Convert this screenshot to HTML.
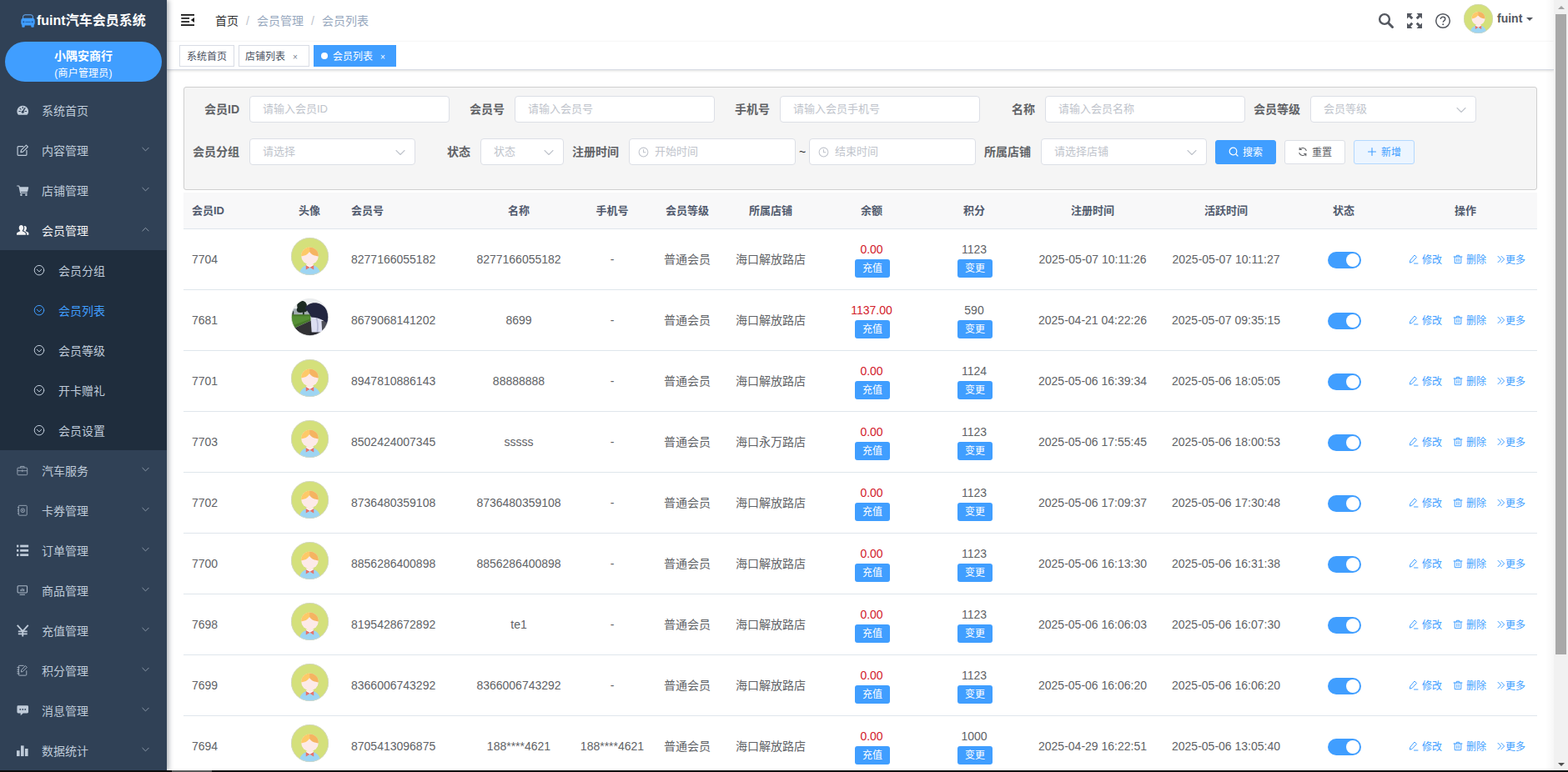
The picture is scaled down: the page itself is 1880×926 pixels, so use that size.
<!DOCTYPE html>
<html lang="zh">
<head>
<meta charset="utf-8">
<title>fuint</title>
<style>
*{box-sizing:border-box;}
html,body{margin:0;padding:0;width:1880px;height:926px;overflow:hidden;}
body{background:#fff;font-family:"Liberation Sans","Noto Sans CJK SC",sans-serif;font-size:14px;color:#606266;}
#app{position:relative;width:1880px;height:926px;overflow:hidden;background:#fff;}
svg{display:block;}
.abs{position:absolute;}
/* sidebar */
#sidebar{position:absolute;left:0;top:0;width:200px;height:924px;background:#304156;box-shadow:2px 0 6px rgba(0,21,41,.35);z-index:5;overflow:hidden;}
#logo{position:absolute;left:0;top:0;width:200px;height:50px;}
#logo .car{position:absolute;left:24px;top:15px;}
#logo .t{position:absolute;left:44px;top:14px;width:134px;height:22px;line-height:22px;font-size:16px;font-weight:bold;color:#fff;white-space:nowrap;}
#pill{position:absolute;left:6px;top:50px;width:188px;height:48px;border-radius:24px;background:#409eff;color:#fff;text-align:center;}
#pill .a{position:absolute;left:0;top:8px;width:188px;height:18px;line-height:18px;font-size:14px;font-weight:bold;}
#pill .b{position:absolute;left:0;top:29px;width:188px;height:18px;line-height:18px;font-size:12px;letter-spacing:.2px;}
.mi{position:absolute;left:0;width:200px;height:48px;line-height:49px;color:#bfcbd9;font-size:14px;white-space:nowrap;}
.mi .ic{position:absolute;left:20px;top:16px;width:15px;height:15px;}
.mi .ic svg{width:14.5px;height:14.5px;}
.mi .tx{position:absolute;left:50px;top:0;}
.mi .ar{position:absolute;left:168px;top:17px;}
.mi.sub .ic{left:40px;}
.mi.sub .tx{left:70px;}
#submenu{position:absolute;left:0;top:300px;width:200px;height:240px;background:#1f2d3d;}
/* navbar */
#navbar{position:absolute;left:200px;top:0;width:1663px;height:50px;background:#fff;box-shadow:0 1px 4px rgba(0,21,41,.1);}
.bc{position:absolute;top:0;height:50px;line-height:50px;font-size:14px;white-space:nowrap;}
/* tags */
#tags{position:absolute;left:200px;top:50px;width:1663px;height:34px;background:#fff;border-bottom:1px solid #d8dce5;box-shadow:0 1px 3px 0 rgba(0,0,0,.12),0 0 3px 0 rgba(0,0,0,.04);}
.tag{position:absolute;top:4px;height:26px;line-height:24px;border:1px solid #d8dce5;background:#fff;color:#495060;font-size:12px;white-space:nowrap;}
.tag.on{background:#409eff;border-color:#409eff;color:#fff;}
.tag span{position:absolute;top:1px;line-height:25px;}
/* panel */
#panel{position:absolute;left:220px;top:104px;width:1623px;height:124px;background:#f5f5f5;border:1px solid #cfcfcf;border-radius:3px;}
.lb{position:absolute;height:32px;line-height:32px;font-size:14px;font-weight:bold;color:#606266;text-align:right;width:68px;padding-right:12px;white-space:nowrap;}
.inp{position:absolute;height:32px;line-height:30px;background:#fff;border:1px solid #dcdfe6;border-radius:4px;color:#c0c4cc;font-size:13px;padding-left:15px;white-space:nowrap;overflow:hidden;}
.inp .dn{position:absolute;right:10px;top:11px;}
.inp .ck{position:absolute;left:10px;top:8px;}
.btn{position:absolute;height:29px;line-height:27px;border-radius:3px;font-size:12px;white-space:nowrap;border:1px solid #dcdfe6;background:#fff;color:#606266;}
.btn span{position:absolute;top:1px;}
.btn>svg{position:absolute;}
/* table */
#thead{position:absolute;left:220px;top:231px;width:1623px;height:44px;background:#f8f8f9;border-bottom:1px solid #dfe6ec;}
.th{position:absolute;top:0;height:43px;line-height:43px;font-size:13px;font-weight:bold;color:#515a6e;white-space:nowrap;text-align:center;}
.row{position:absolute;left:220px;width:1623px;height:73px;border-bottom:1px solid #dfe6ec;background:#fff;}
.c{position:absolute;top:0;height:72px;line-height:72px;font-size:14px;color:#606266;white-space:nowrap;text-align:center;}
.c.l{text-align:left;}
.av{position:absolute;left:129px;top:10px;width:45px;height:45px;}
.num{position:absolute;top:15px;height:18px;line-height:18px;font-size:14px;text-align:center;white-space:nowrap;}
.red{color:#d2202b;}
.mb{position:absolute;top:36px;width:42px;height:22px;line-height:22px;border-radius:3px;background:#409eff;color:#fff;font-size:12px;text-align:center;white-space:nowrap;}
.sw{position:absolute;left:1372px;top:27px;width:40px;height:20px;border-radius:10px;background:#409eff;}
.sw i{position:absolute;left:22px;top:2px;width:16px;height:16px;border-radius:8px;background:#fff;}
.op{position:absolute;top:26px;height:20px;line-height:20px;font-size:12px;color:#409eff;white-space:nowrap;}
.op>svg{position:absolute;top:4px;}
/* scrollbar */
#sb{position:absolute;left:1863px;top:0;width:17px;height:924px;background:#f1f1f1;z-index:8;}
#sbg{position:absolute;left:1853px;top:0;width:10px;height:924px;background:linear-gradient(to right,rgba(0,0,0,0),rgba(0,0,0,.03));z-index:8;}
#sb .th2{position:absolute;left:2px;top:17px;width:13px;height:768px;background:#a8a8a8;}
#bot{position:absolute;left:0;top:924px;width:1880px;height:2px;background:#0c0c0c;z-index:9;}
#bot i{position:absolute;left:206px;top:0;width:48px;height:2px;background:#5a5a5a;}
</style>
</head>
<body>
<div id="app">
<div id="sidebar">
<div id="logo"><div class="car"><svg width="17" height="17" viewBox="0 0 17 17" style="margin-left:.5px;margin-top:.5px"><path d="M2.600 7V4.200A2.400 2.400 0 0 1 5 1.800h7a2.400 2.400 0 0 1 2.400 2.400V7" fill="none" stroke="#6ab3ff" stroke-width="1"/><rect x="0.300" y="5.800" width="16.400" height="8.600" rx="3" fill="#409eff"/><rect x="1.300" y="12" width="3.400" height="4.800" rx=".8" fill="#409eff"/><rect x="12.300" y="12" width="3.400" height="4.800" rx=".8" fill="#409eff"/><circle cx="3.300" cy="10.300" r="1.100" fill="#1d5fa8"/><circle cx="13.700" cy="10.300" r="1.100" fill="#1d5fa8"/><rect x="5.300" y="9.900" width="6.400" height=".9" fill="#1d5fa8"/></svg></div><div class="t">fuint汽车会员系统</div></div>
<div id="pill"><div class="a">小隅安商行</div><div class="b">(商户管理员)</div></div>
<div id="submenu"></div>
<div class="mi " style="top:109px;color:#bfcbd9"><div class="ic"><svg width="16" height="16" viewBox="0 0 16 16" style=""><path fill="#bfcbd9" d="M8 2a7.500 7.500 0 0 0-6.300 11.600c.2.300.5.400.8.400h11c.3 0 .6-.1.8-.4A7.500 7.500 0 0 0 8 2z"/><g stroke="#304156" stroke-width="1.300" stroke-linecap="round"><path d="M8 3.600v1.600M3.200 9.400h1.600M11.200 9.400h1.600M4.400 5.600l1.100 1.100"/><path d="M10.900 5.200 8.300 9.400" stroke-width="1.600"/></g><circle cx="8" cy="10.200" r="1.700" fill="#304156"/></svg></div><div class="tx">系统首页</div></div>
<div class="mi " style="top:157px;color:#bfcbd9"><div class="ic"><svg width="16" height="16" viewBox="0 0 16 16" style=""><g fill="none" stroke="#bfcbd9" stroke-width="1.300" stroke-linejoin="round" stroke-linecap="round"><path d="M8.500 2.800H2.200a1 1 0 0 0-1 1v10a1 1 0 0 0 1 1h10a1 1 0 0 0 1-1V8"/><path d="M12.600 1.200l2.200 2.200-6.600 6.600-2.800.6.6-2.800z"/></g></svg></div><div class="tx">内容管理</div><svg width="9" height="6" viewBox="0 0 8.600 6" style="position:absolute;left:170px;top:19px"><path d="M.6 1.200l3.700 3.700L8 1.200" fill="none" stroke="#8d99a8" stroke-width="1" stroke-linecap="round" stroke-linejoin="round"/></svg></div>
<div class="mi " style="top:205px;color:#bfcbd9"><div class="ic"><svg width="16" height="16" viewBox="0 0 16 16" style=""><path fill="#bfcbd9" d="M.6 1.600h2.500c.3 0 .6.2.7.6l.3 1.300h11c.4 0 .7.4.6.8l-1.100 5c-.1.3-.3.5-.6.5H5.400l.2 1h8c.4 0 .6.3.6.6s-.2.6-.6.6H5.100c-.3 0-.6-.2-.6-.5L2.600 2.800H.6C.3 2.800 0 2.500 0 2.200s.3-.6.6-.6z"/><circle cx="6" cy="14" r="1.400" fill="#bfcbd9"/><circle cx="12.600" cy="14" r="1.400" fill="#bfcbd9"/></svg></div><div class="tx">店铺管理</div><svg width="9" height="6" viewBox="0 0 8.600 6" style="position:absolute;left:170px;top:19px"><path d="M.6 1.200l3.700 3.700L8 1.200" fill="none" stroke="#8d99a8" stroke-width="1" stroke-linecap="round" stroke-linejoin="round"/></svg></div>
<div class="mi " style="top:253px;color:#f4f4f5"><div class="ic"><svg width="16" height="16" viewBox="0 0 16 16" style=""><g fill="#f4f4f5"><path d="M6 1.200c1.900 0 3 1.500 3 3.500 0 1.500-.6 2.800-1.500 3.500v.9l3.300 1.700c.7.400 1.200 1 1.200 1.800v1.600H0v-1.600c0-.8.5-1.500 1.200-1.800l3.300-1.700v-.9C3.600 7.500 3 6.200 3 4.700c0-2 1.100-3.500 3-3.500z"/><path d="M10.600 2.200c1.600 0 2.600 1.300 2.600 3 0 1.300-.5 2.400-1.300 3v.8l2.900 1.500c.7.300 1.100.9 1.100 1.600v2.100h-2.700v-1.600c0-1.200-.7-2.200-1.700-2.700l-2.600-1.300c.9-.9 1.300-2.300 1.300-3.900 0-.8-.2-1.600-.5-2.200.3-.2.6-.3.9-.3z"/></g></svg></div><div class="tx">会员管理</div><svg width="9" height="6" viewBox="0 0 8.600 6" style="position:absolute;left:170px;top:19px"><path d="M.6 5l3.700-3.700L8 5" fill="none" stroke="#8d99a8" stroke-width="1" stroke-linecap="round" stroke-linejoin="round"/></svg></div>
<div class="mi sub" style="top:301px;color:#bfcbd9"><div class="ic"><svg width="16" height="16" viewBox="0 0 16 16" style=""><g fill="none" stroke="#bfcbd9" stroke-width="1.100" stroke-linecap="round" stroke-linejoin="round"><circle cx="7.700" cy="7.900" r="6.350"/><path d="M4.700 6.900l3 2.900 3-2.900"/></g></svg></div><div class="tx">会员分组</div></div>
<div class="mi sub" style="top:349px;color:#409eff"><div class="ic"><svg width="16" height="16" viewBox="0 0 16 16" style=""><g fill="none" stroke="#409eff" stroke-width="1.100" stroke-linecap="round" stroke-linejoin="round"><circle cx="7.700" cy="7.900" r="6.350"/><path d="M4.700 6.900l3 2.900 3-2.900"/></g></svg></div><div class="tx">会员列表</div></div>
<div class="mi sub" style="top:397px;color:#bfcbd9"><div class="ic"><svg width="16" height="16" viewBox="0 0 16 16" style=""><g fill="none" stroke="#bfcbd9" stroke-width="1.100" stroke-linecap="round" stroke-linejoin="round"><circle cx="7.700" cy="7.900" r="6.350"/><path d="M4.700 6.900l3 2.900 3-2.900"/></g></svg></div><div class="tx">会员等级</div></div>
<div class="mi sub" style="top:445px;color:#bfcbd9"><div class="ic"><svg width="16" height="16" viewBox="0 0 16 16" style=""><g fill="none" stroke="#bfcbd9" stroke-width="1.100" stroke-linecap="round" stroke-linejoin="round"><circle cx="7.700" cy="7.900" r="6.350"/><path d="M4.700 6.900l3 2.900 3-2.900"/></g></svg></div><div class="tx">开卡赠礼</div></div>
<div class="mi sub" style="top:493px;color:#bfcbd9"><div class="ic"><svg width="16" height="16" viewBox="0 0 16 16" style=""><g fill="none" stroke="#bfcbd9" stroke-width="1.100" stroke-linecap="round" stroke-linejoin="round"><circle cx="7.700" cy="7.900" r="6.350"/><path d="M4.700 6.900l3 2.900 3-2.900"/></g></svg></div><div class="tx">会员设置</div></div>
<div class="mi " style="top:541px;color:#bfcbd9"><div class="ic"><svg width="16" height="16" viewBox="0 0 16 16" style=""><g fill="none" stroke="#bfcbd9" stroke-width="1.1" stroke-linejoin="round" opacity=".68"><rect x="1" y="4.500" width="13" height="9.500" rx="1"/><path d="M5 4.500V2.700h5V4.500M1 8.500h13M7.500 7v3"/></g></svg></div><div class="tx">汽车服务</div><svg width="9" height="6" viewBox="0 0 8.600 6" style="position:absolute;left:170px;top:19px"><path d="M.6 1.200l3.700 3.700L8 1.200" fill="none" stroke="#8d99a8" stroke-width="1" stroke-linecap="round" stroke-linejoin="round"/></svg></div>
<div class="mi " style="top:589px;color:#bfcbd9"><div class="ic"><svg width="16" height="16" viewBox="0 0 16 16" style=""><g fill="none" stroke="#bfcbd9" stroke-width="1.1" stroke-linejoin="round" opacity=".68"><rect x="2.500" y="1.500" width="11" height="13" rx="1"/><circle cx="8" cy="8" r="2.600"/><circle cx="8" cy="8" r=".8"/><path d="M1 4h2.500M1 7h2M1 9h2M1 12h2.500"/></g></svg></div><div class="tx">卡券管理</div><svg width="9" height="6" viewBox="0 0 8.600 6" style="position:absolute;left:170px;top:19px"><path d="M.6 1.200l3.700 3.700L8 1.200" fill="none" stroke="#8d99a8" stroke-width="1" stroke-linecap="round" stroke-linejoin="round"/></svg></div>
<div class="mi " style="top:637px;color:#bfcbd9"><div class="ic"><svg width="16" height="16" viewBox="0 0 16 16" style=""><g fill="#bfcbd9"><rect x="0" y=".7" width="2.600" height="3"/><rect x="4.600" y=".7" width="11" height="3"/><rect x="0" y="6.600" width="2.600" height="3"/><rect x="4.600" y="6.600" width="11" height="3"/><rect x="0" y="12.500" width="2.600" height="3"/><rect x="4.600" y="12.500" width="11" height="3"/></g></svg></div><div class="tx">订单管理</div><svg width="9" height="6" viewBox="0 0 8.600 6" style="position:absolute;left:170px;top:19px"><path d="M.6 1.200l3.700 3.700L8 1.200" fill="none" stroke="#8d99a8" stroke-width="1" stroke-linecap="round" stroke-linejoin="round"/></svg></div>
<div class="mi " style="top:685px;color:#bfcbd9"><div class="ic"><svg width="16" height="16" viewBox="0 0 16 16" style=""><g fill="none" stroke="#bfcbd9" stroke-width="1.200" stroke-linejoin="round" stroke-linecap="round" opacity=".85"><rect x="1.200" y="2" width="12.600" height="9" rx="1"/><path d="M4.500 13.500h6M5.500 8.500V7M7.500 8.500V5.500M9.500 8.500V6.500"/></g></svg></div><div class="tx">商品管理</div><svg width="9" height="6" viewBox="0 0 8.600 6" style="position:absolute;left:170px;top:19px"><path d="M.6 1.200l3.700 3.700L8 1.200" fill="none" stroke="#8d99a8" stroke-width="1" stroke-linecap="round" stroke-linejoin="round"/></svg></div>
<div class="mi " style="top:733px;color:#bfcbd9"><div class="ic"><svg width="16" height="16" viewBox="0 0 16 16" style=""><g fill="none" stroke="#bfcbd9" stroke-width="2"><path d="M.8 1l7.200 8 7.200-8M8 9v7M2 9.200h12M2 12.600h12"/></g></svg></div><div class="tx">充值管理</div><svg width="9" height="6" viewBox="0 0 8.600 6" style="position:absolute;left:170px;top:19px"><path d="M.6 1.200l3.700 3.700L8 1.200" fill="none" stroke="#8d99a8" stroke-width="1" stroke-linecap="round" stroke-linejoin="round"/></svg></div>
<div class="mi " style="top:781px;color:#bfcbd9"><div class="ic"><svg width="16" height="16" viewBox="0 0 16 16" style=""><g fill="none" stroke="#bfcbd9" stroke-width="1.100" stroke-linejoin="round" stroke-linecap="round" opacity=".8"><path d="M13 8.500v5a1 1 0 0 1-1 1H3.500a1 1 0 0 1-1-1v-11a1 1 0 0 1 1-1H9"/><path d="M1 4h2.500M1 7h2M1 9.500h2M1 12h2.500"/><path d="M11.800 2l1.800 1.800-5.600 5.600-2.200.500.500-2.200z"/></g></svg></div><div class="tx">积分管理</div><svg width="9" height="6" viewBox="0 0 8.600 6" style="position:absolute;left:170px;top:19px"><path d="M.6 1.200l3.700 3.700L8 1.200" fill="none" stroke="#8d99a8" stroke-width="1" stroke-linecap="round" stroke-linejoin="round"/></svg></div>
<div class="mi " style="top:829px;color:#bfcbd9"><div class="ic"><svg width="16" height="16" viewBox="0 0 16 16" style=""><path fill="#bfcbd9" d="M2 1.500h12a1.500 1.500 0 0 1 1.500 1.500v7A1.500 1.500 0 0 1 14 11.500H8.500l-3.300 3v-3H2A1.500 1.500 0 0 1 .5 10V3A1.500 1.500 0 0 1 2 1.500z"/><g fill="#304156"><circle cx="4.700" cy="6.500" r="1"/><circle cx="8" cy="6.500" r="1"/><circle cx="11.300" cy="6.500" r="1"/></g></svg></div><div class="tx">消息管理</div><svg width="9" height="6" viewBox="0 0 8.600 6" style="position:absolute;left:170px;top:19px"><path d="M.6 1.200l3.700 3.700L8 1.200" fill="none" stroke="#8d99a8" stroke-width="1" stroke-linecap="round" stroke-linejoin="round"/></svg></div>
<div class="mi " style="top:877px;color:#bfcbd9"><div class="ic"><svg width="16" height="16" viewBox="0 0 16 16" style=""><g fill="#bfcbd9"><rect x="0" y="8" width="4" height="7.500"/><rect x="5.500" y="1.500" width="4" height="14"/><rect x="11" y="5.500" width="4" height="10"/></g></svg></div><div class="tx">数据统计</div><svg width="9" height="6" viewBox="0 0 8.600 6" style="position:absolute;left:170px;top:19px"><path d="M.6 1.200l3.700 3.700L8 1.200" fill="none" stroke="#8d99a8" stroke-width="1" stroke-linecap="round" stroke-linejoin="round"/></svg></div>
</div>
<div id="navbar">
<div class="abs" style="left:17px;top:17px"><svg width="16" height="14" viewBox="0 0 16 14" style=""><g fill="#1a1a1a"><rect x="0" y="0" width="16" height="1.800"/><rect x=".3" y="4.100" width="9.800" height="1.700"/><rect x=".3" y="8.200" width="9.800" height="1.700"/><rect x="0" y="12.200" width="16" height="1.800"/><path d="M16 4v6L11.800 7z"/></g></svg></div>
<div class="bc" style="left:58px;color:#303133">首页</div>
<div class="bc" style="left:95px;color:#c0c4cc">/</div>
<div class="bc" style="left:108px;color:#97a8be">会员管理</div>
<div class="bc" style="left:173px;color:#c0c4cc">/</div>
<div class="bc" style="left:186px;color:#97a8be">会员列表</div>
<div class="abs" style="left:1452px;top:15px"><svg width="20" height="20" viewBox="0 0 20 20" style=""><g fill="none" stroke="#545860" stroke-linecap="round"><circle cx="8" cy="8" r="5.900" stroke-width="2.400"/><path d="M12.800 12.800l4.700 4.700" stroke-width="3"/></g></svg></div>
<div class="abs" style="left:1486px;top:15px"><svg width="20" height="20" viewBox="0 0 20 20" style=""><g fill="#545860"><path d="M1 1h6.500L5.300 3.200l3 3-2.100 2.100-3-3L1 7.500z"/><path d="M19 1v6.500l-2.200-2.200-3 3-2.100-2.100 3-3L12.500 1z"/><path d="M1 19v-6.500l2.200 2.200 3-3 2.100 2.100-3 3L7.500 19z"/><path d="M19 19h-6.500l2.200-2.200-3-3 2.100-2.100 3 3 2.200-2.200z"/></g></svg></div>
<div class="abs" style="left:1520px;top:15px"><svg width="20" height="20" viewBox="0 0 20 20" style=""><circle cx="10" cy="10" r="8.300" fill="none" stroke="#545860" stroke-width="1.500"/><path d="M7.300 8c0-1.600 1.200-2.700 2.800-2.700s2.700 1 2.700 2.400c0 1.200-.7 1.700-1.400 2.200-.7.500-1.100.9-1.100 1.900" fill="none" stroke="#545860" stroke-width="1.500"/><circle cx="10.200" cy="14.300" r="1" fill="#545860"/></svg></div>
<div class="abs" style="left:1555px;top:5px"><svg width="35" height="35" viewBox="0 0 100 100" style=""><defs><clipPath id="avn"><circle cx="50" cy="50" r="50"/></clipPath></defs>
<g clip-path="url(#avn)"><rect width="100" height="100" fill="#d4e07b"/>
<path d="M22 100C22 82 33 72.500 50 72.500s28 9.500 28 27.500z" fill="#9dd5f3"/>
<path d="M43 66h14v8l-7 5-7-5z" fill="#fdeae8"/>
<path d="M40.500 70.500l9.500 7 9.500-7v5.500l-9.500 4-9.500-4z" fill="#fff"/>
<path d="M39.500 73.500L50 79.500 39.500 85.500zM60.500 73.500L50 79.500l10.500 6z" fill="#e8746a"/>
<circle cx="50" cy="48.500" r="23" fill="#fdeae8"/>
<path d="M27 50A23 23 0 0 1 49 25.500V38C44 46 36 49 27 50z" fill="#fdc968"/>
<path d="M73 50A23 23 0 0 0 49 25.500V38c5 8 14 11 24 12z" fill="#f5b461"/>
</g><circle cx="50" cy="50" r="49.200" fill="none" stroke="#d3d6cc" stroke-width="1.800"/></svg></div>
<div class="abs" style="left:1595px;top:12px;height:20px;line-height:20px;font-size:14px;font-weight:bold;color:#545860">fuint</div>
<div class="abs" style="left:1630px;top:21px;width:0;height:0;border-left:4px solid transparent;border-right:4px solid transparent;border-top:4px solid #545860"></div>
</div>
<div id="tags">
<div class="tag" style="left:15px;width:66px"><span style="left:8px">系统首页</span></div>
<div class="tag" style="left:86px;width:85px"><span style="left:7px">店铺列表</span><span style="left:64px;top:1px;font-size:10px;color:#7a8290">×</span></div>
<div class="tag on" style="left:176px;width:99px"><i style="position:absolute;left:8px;top:8px;width:8px;height:8px;border-radius:4px;background:#fff"></i><span style="left:22px">会员列表</span><span style="left:79px;top:1px;font-size:10px">×</span></div>
</div>
<div id="panel">
<div class="lb" style="left:10px;top:10px">会员ID</div>
<div class="inp" style="left:78px;top:10px;width:240px;">请输入会员ID</div>
<div class="lb" style="left:328px;top:10px">会员号</div>
<div class="inp" style="left:396px;top:10px;width:240px;">请输入会员号</div>
<div class="lb" style="left:646px;top:10px">手机号</div>
<div class="inp" style="left:714px;top:10px;width:240px;">请输入会员手机号</div>
<div class="lb" style="left:964px;top:10px">名称</div>
<div class="inp" style="left:1032px;top:10px;width:240px;">请输入会员名称</div>
<div class="lb" style="left:1282px;top:10px">会员等级</div>
<div class="inp" style="left:1350px;top:10px;width:199px;">会员等级<svg width="12" height="12" viewBox="0 0 12 12" style="position:absolute;right:11px;top:10px"><path d="M1 3.500l5 5 5-5" fill="none" stroke="#c0c4cc" stroke-width="1.100" stroke-linecap="round" stroke-linejoin="round"/></svg></div>
<div class="lb" style="left:10px;top:61px">会员分组</div>
<div class="inp" style="left:78px;top:61px;width:199px;">请选择<svg width="12" height="12" viewBox="0 0 12 12" style="position:absolute;right:11px;top:10px"><path d="M1 3.500l5 5 5-5" fill="none" stroke="#c0c4cc" stroke-width="1.100" stroke-linecap="round" stroke-linejoin="round"/></svg></div>
<div class="lb" style="left:287px;top:61px">状态</div>
<div class="inp" style="left:355px;top:61px;width:100px;">状态<svg width="12" height="12" viewBox="0 0 12 12" style="position:absolute;right:11px;top:10px"><path d="M1 3.500l5 5 5-5" fill="none" stroke="#c0c4cc" stroke-width="1.100" stroke-linecap="round" stroke-linejoin="round"/></svg></div>
<div class="lb" style="left:465px;top:61px">注册时间</div>
<div class="inp" style="left:533px;top:61px;width:200px;padding-left:30px;">开始时间<svg width="13" height="13" viewBox="0 0 14 14" style="position:absolute;left:10px;top:9px"><g fill="none" stroke="#c0c4cc" stroke-width="1.100" stroke-linecap="round"><circle cx="7" cy="7" r="5.800"/><path d="M7 3.800V7.300h2.600"/></g></svg></div>
<div class="abs" style="left:737px;top:61px;height:32px;line-height:32px;color:#222;font-size:14px">~</div>
<div class="inp" style="left:749px;top:61px;width:200px;padding-left:30px;">结束时间<svg width="13" height="13" viewBox="0 0 14 14" style="position:absolute;left:10px;top:9px"><g fill="none" stroke="#c0c4cc" stroke-width="1.100" stroke-linecap="round"><circle cx="7" cy="7" r="5.800"/><path d="M7 3.800V7.300h2.600"/></g></svg></div>
<div class="lb" style="left:959px;top:61px">所属店铺</div>
<div class="inp" style="left:1027px;top:61px;width:199px;">请选择店铺<svg width="12" height="12" viewBox="0 0 12 12" style="position:absolute;right:11px;top:10px"><path d="M1 3.500l5 5 5-5" fill="none" stroke="#c0c4cc" stroke-width="1.100" stroke-linecap="round" stroke-linejoin="round"/></svg></div>
<div class="btn" style="left:1236px;top:63px;width:73px;background:#409eff;border-color:#409eff;color:#fff"><svg width="12" height="12" viewBox="0 0 12 12" style="left:15px;top:7px"><g fill="none" stroke="#fff" stroke-width="1.200" stroke-linecap="round"><circle cx="5.500" cy="5.500" r="4.300"/><path d="M8.700 8.700l2.300 2.300"/></g></svg><span style="left:32px">搜索</span></div>
<div class="btn" style="left:1319px;top:63px;width:73px"><svg width="12" height="12" viewBox="0 0 12 12" style="left:15px;top:7px"><g fill="none" stroke="#606266" stroke-width="1.100" stroke-linecap="round"><path d="M10.200 4.500A4.500 4.500 0 0 0 2.300 3.300M1.800 7.500a4.500 4.500 0 0 0 7.900 1.200"/><path d="M2.200 1.300v2.200h2.200M9.800 10.700V8.500H7.600"/></g></svg><span style="left:32px">重置</span></div>
<div class="btn" style="left:1402px;top:63px;width:73px;background:#ecf5ff;border-color:#b3d8ff;color:#409eff"><svg width="12" height="12" viewBox="0 0 12 12" style="left:15px;top:7px"><g fill="none" stroke="#409eff" stroke-width="1.100" stroke-linecap="round"><path d="M6 1.500v9M1.500 6h9"/></g></svg><span style="left:32px">新增</span></div>
</div>
<div id="thead">
<div class="th" style="left:10px;text-align:left;">会员ID</div>
<div class="th" style="left:71px;width:160px;">头像</div>
<div class="th" style="left:201px;text-align:left;">会员号</div>
<div class="th" style="left:322px;width:160px;">名称</div>
<div class="th" style="left:434px;width:160px;">手机号</div>
<div class="th" style="left:524px;width:160px;">会员等级</div>
<div class="th" style="left:624px;width:160px;">所属店铺</div>
<div class="th" style="left:745px;width:160px;">余额</div>
<div class="th" style="left:868px;width:160px;">积分</div>
<div class="th" style="left:1010px;width:160px;">注册时间</div>
<div class="th" style="left:1170px;width:160px;">活跃时间</div>
<div class="th" style="left:1311px;width:160px;">状态</div>
<div class="th" style="left:1457px;width:160px;">操作</div>
</div>
<div class="row" style="top:275px">
<div class="c" style="left:10px;text-align:left;">7704</div>
<div class="av"><svg width="45" height="45" viewBox="0 0 100 100" style=""><defs><clipPath id="av0"><circle cx="50" cy="50" r="50"/></clipPath></defs>
<g clip-path="url(#av0)"><rect width="100" height="100" fill="#d4e07b"/>
<path d="M22 100C22 82 33 72.500 50 72.500s28 9.500 28 27.500z" fill="#9dd5f3"/>
<path d="M43 66h14v8l-7 5-7-5z" fill="#fdeae8"/>
<path d="M40.500 70.500l9.500 7 9.500-7v5.500l-9.500 4-9.500-4z" fill="#fff"/>
<path d="M39.500 73.500L50 79.500 39.500 85.500zM60.500 73.500L50 79.500l10.500 6z" fill="#e8746a"/>
<circle cx="50" cy="48.500" r="23" fill="#fdeae8"/>
<path d="M27 50A23 23 0 0 1 49 25.500V38C44 46 36 49 27 50z" fill="#fdc968"/>
<path d="M73 50A23 23 0 0 0 49 25.500V38c5 8 14 11 24 12z" fill="#f5b461"/>
</g><circle cx="50" cy="50" r="49.200" fill="none" stroke="#d3d6cc" stroke-width="1.800"/></svg></div>
<div class="c" style="left:201px;text-align:left;">8277166055182</div>
<div class="c" style="left:322px;width:160px;">8277166055182</div>
<div class="c" style="left:434px;width:160px;">-</div>
<div class="c" style="left:524px;width:160px;">普通会员</div>
<div class="c" style="left:624px;width:160px;">海口解放路店</div>
<div class="num red" style="left:775px;width:100px">0.00</div>
<div class="mb" style="left:805px">充值</div>
<div class="num" style="left:898px;width:100px">1123</div>
<div class="mb" style="left:928px">变更</div>
<div class="c" style="left:1000px;width:180px;">2025-05-07 10:11:26</div>
<div class="c" style="left:1160px;width:180px;">2025-05-07 10:11:27</div>
<div class="sw"><i></i></div>
<div class="op" style="left:1469px;width:42px"><svg width="12" height="12" viewBox="0 0 12 12" style="left:0"><g fill="none" stroke="#409eff" stroke-width="1" stroke-linecap="round" stroke-linejoin="round"><path d="M7.300 1.300l2.200 2.200-5.600 6-2.600.600.500-2.600zM6.500 11h4.500"/></g></svg><span style="position:absolute;left:16px;top:1px">修改</span></div>
<div class="op" style="left:1522px;width:42px"><svg width="12" height="12" viewBox="0 0 12 12" style="left:0"><g fill="none" stroke="#409eff" stroke-width="1" stroke-linecap="round" stroke-linejoin="round"><path d="M1 3h10M4.300 3V1.300h3.400V3M2.200 3v7.700h7.600V3M4.800 5.200v3.500M7.200 5.200v3.500"/></g></svg><span style="position:absolute;left:16px;top:1px">删除</span></div>
<div class="op" style="left:1574px;width:42px"><svg width="12" height="12" viewBox="0 0 12 12" style="left:0"><g fill="none" stroke="#409eff" stroke-width="1" stroke-linecap="round" stroke-linejoin="round"><path d="M2 2.300l3.600 3.700L2 9.700M6 2.300l3.600 3.700L6 9.700"/></g></svg><span style="position:absolute;left:11px;top:1px">更多</span></div>
</div>
<div class="row" style="top:348px">
<div class="c" style="left:10px;text-align:left;">7681</div>
<div class="av"><svg width="45" height="45" viewBox="0 0 100 100"><defs><clipPath id="ph"><circle cx="50" cy="50" r="49"/></clipPath><filter id="phb" x="-5%" y="-5%" width="110%" height="110%"><feGaussianBlur stdDeviation="1.300"/></filter></defs>
<g clip-path="url(#ph)"><g filter="url(#phb)"><rect x="-5" y="-5" width="110" height="110" fill="#eceef0"/>
<path d="M-5 30c12-5 26-3 57 4v12H-5z" fill="#a3adb3"/>
<ellipse cx="29" cy="20" rx="13" ry="14" fill="#1e2b23"/><ellipse cx="25" cy="30" rx="10" ry="8" fill="#1e2b23"/><ellipse cx="36" cy="28" rx="7" ry="8" fill="#1e2b23"/><rect x="31" y="32" width="4" height="12" fill="#1e2b23"/><rect x="3" y="34" width="4" height="10" fill="#2a392e"/>
<path d="M-5 43h58v16L9 79-5 72z" fill="#47792a"/><path d="M-5 47h55v8L4 72l-9-4z" fill="#558f34"/>
<path d="M9 79l44-20 6 46H16z" fill="#303235"/>
<path d="M52 48h29l2 44H55z" fill="#dcdef1"/><path d="M67 52c4 8 5 22 3 38" stroke="#b7bad6" stroke-width="4" fill="none"/>
<path d="M81 60h24v32H83z" fill="#4d4f58"/>
<path d="M50 90h38v15H52z" fill="#25262d"/>
<path d="M37 26C46 9 76 3 97 31c5 10 6 24 3 38C87 57 70 50 54 50c-4-8-10-17-17-24z" fill="#23253f"/>
</g></g><circle cx="50" cy="50" r="49.200" fill="none" stroke="#e3e4e6" stroke-width="1.600"/></svg></div>
<div class="c" style="left:201px;text-align:left;">8679068141202</div>
<div class="c" style="left:322px;width:160px;">8699</div>
<div class="c" style="left:434px;width:160px;">-</div>
<div class="c" style="left:524px;width:160px;">普通会员</div>
<div class="c" style="left:624px;width:160px;">海口解放路店</div>
<div class="num red" style="left:775px;width:100px">1137.00</div>
<div class="mb" style="left:805px">充值</div>
<div class="num" style="left:898px;width:100px">590</div>
<div class="mb" style="left:928px">变更</div>
<div class="c" style="left:1000px;width:180px;">2025-04-21 04:22:26</div>
<div class="c" style="left:1160px;width:180px;">2025-05-07 09:35:15</div>
<div class="sw"><i></i></div>
<div class="op" style="left:1469px;width:42px"><svg width="12" height="12" viewBox="0 0 12 12" style="left:0"><g fill="none" stroke="#409eff" stroke-width="1" stroke-linecap="round" stroke-linejoin="round"><path d="M7.300 1.300l2.200 2.200-5.600 6-2.600.600.500-2.600zM6.500 11h4.500"/></g></svg><span style="position:absolute;left:16px;top:1px">修改</span></div>
<div class="op" style="left:1522px;width:42px"><svg width="12" height="12" viewBox="0 0 12 12" style="left:0"><g fill="none" stroke="#409eff" stroke-width="1" stroke-linecap="round" stroke-linejoin="round"><path d="M1 3h10M4.300 3V1.300h3.400V3M2.200 3v7.700h7.600V3M4.800 5.200v3.500M7.200 5.200v3.500"/></g></svg><span style="position:absolute;left:16px;top:1px">删除</span></div>
<div class="op" style="left:1574px;width:42px"><svg width="12" height="12" viewBox="0 0 12 12" style="left:0"><g fill="none" stroke="#409eff" stroke-width="1" stroke-linecap="round" stroke-linejoin="round"><path d="M2 2.300l3.600 3.700L2 9.700M6 2.300l3.600 3.700L6 9.700"/></g></svg><span style="position:absolute;left:11px;top:1px">更多</span></div>
</div>
<div class="row" style="top:421px">
<div class="c" style="left:10px;text-align:left;">7701</div>
<div class="av"><svg width="45" height="45" viewBox="0 0 100 100" style=""><defs><clipPath id="av2"><circle cx="50" cy="50" r="50"/></clipPath></defs>
<g clip-path="url(#av2)"><rect width="100" height="100" fill="#d4e07b"/>
<path d="M22 100C22 82 33 72.500 50 72.500s28 9.500 28 27.500z" fill="#9dd5f3"/>
<path d="M43 66h14v8l-7 5-7-5z" fill="#fdeae8"/>
<path d="M40.500 70.500l9.500 7 9.500-7v5.500l-9.500 4-9.500-4z" fill="#fff"/>
<path d="M39.500 73.500L50 79.500 39.500 85.500zM60.500 73.500L50 79.500l10.500 6z" fill="#e8746a"/>
<circle cx="50" cy="48.500" r="23" fill="#fdeae8"/>
<path d="M27 50A23 23 0 0 1 49 25.500V38C44 46 36 49 27 50z" fill="#fdc968"/>
<path d="M73 50A23 23 0 0 0 49 25.500V38c5 8 14 11 24 12z" fill="#f5b461"/>
</g><circle cx="50" cy="50" r="49.200" fill="none" stroke="#d3d6cc" stroke-width="1.800"/></svg></div>
<div class="c" style="left:201px;text-align:left;">8947810886143</div>
<div class="c" style="left:322px;width:160px;">88888888</div>
<div class="c" style="left:434px;width:160px;">-</div>
<div class="c" style="left:524px;width:160px;">普通会员</div>
<div class="c" style="left:624px;width:160px;">海口解放路店</div>
<div class="num red" style="left:775px;width:100px">0.00</div>
<div class="mb" style="left:805px">充值</div>
<div class="num" style="left:898px;width:100px">1124</div>
<div class="mb" style="left:928px">变更</div>
<div class="c" style="left:1000px;width:180px;">2025-05-06 16:39:34</div>
<div class="c" style="left:1160px;width:180px;">2025-05-06 18:05:05</div>
<div class="sw"><i></i></div>
<div class="op" style="left:1469px;width:42px"><svg width="12" height="12" viewBox="0 0 12 12" style="left:0"><g fill="none" stroke="#409eff" stroke-width="1" stroke-linecap="round" stroke-linejoin="round"><path d="M7.300 1.300l2.200 2.200-5.600 6-2.600.600.500-2.600zM6.500 11h4.500"/></g></svg><span style="position:absolute;left:16px;top:1px">修改</span></div>
<div class="op" style="left:1522px;width:42px"><svg width="12" height="12" viewBox="0 0 12 12" style="left:0"><g fill="none" stroke="#409eff" stroke-width="1" stroke-linecap="round" stroke-linejoin="round"><path d="M1 3h10M4.300 3V1.300h3.400V3M2.200 3v7.700h7.600V3M4.800 5.200v3.500M7.200 5.200v3.500"/></g></svg><span style="position:absolute;left:16px;top:1px">删除</span></div>
<div class="op" style="left:1574px;width:42px"><svg width="12" height="12" viewBox="0 0 12 12" style="left:0"><g fill="none" stroke="#409eff" stroke-width="1" stroke-linecap="round" stroke-linejoin="round"><path d="M2 2.300l3.600 3.700L2 9.700M6 2.300l3.600 3.700L6 9.700"/></g></svg><span style="position:absolute;left:11px;top:1px">更多</span></div>
</div>
<div class="row" style="top:494px">
<div class="c" style="left:10px;text-align:left;">7703</div>
<div class="av"><svg width="45" height="45" viewBox="0 0 100 100" style=""><defs><clipPath id="av3"><circle cx="50" cy="50" r="50"/></clipPath></defs>
<g clip-path="url(#av3)"><rect width="100" height="100" fill="#d4e07b"/>
<path d="M22 100C22 82 33 72.500 50 72.500s28 9.500 28 27.500z" fill="#9dd5f3"/>
<path d="M43 66h14v8l-7 5-7-5z" fill="#fdeae8"/>
<path d="M40.500 70.500l9.500 7 9.500-7v5.500l-9.500 4-9.500-4z" fill="#fff"/>
<path d="M39.500 73.500L50 79.500 39.500 85.500zM60.500 73.500L50 79.500l10.500 6z" fill="#e8746a"/>
<circle cx="50" cy="48.500" r="23" fill="#fdeae8"/>
<path d="M27 50A23 23 0 0 1 49 25.500V38C44 46 36 49 27 50z" fill="#fdc968"/>
<path d="M73 50A23 23 0 0 0 49 25.500V38c5 8 14 11 24 12z" fill="#f5b461"/>
</g><circle cx="50" cy="50" r="49.200" fill="none" stroke="#d3d6cc" stroke-width="1.800"/></svg></div>
<div class="c" style="left:201px;text-align:left;">8502424007345</div>
<div class="c" style="left:322px;width:160px;">sssss</div>
<div class="c" style="left:434px;width:160px;">-</div>
<div class="c" style="left:524px;width:160px;">普通会员</div>
<div class="c" style="left:624px;width:160px;">海口永万路店</div>
<div class="num red" style="left:775px;width:100px">0.00</div>
<div class="mb" style="left:805px">充值</div>
<div class="num" style="left:898px;width:100px">1123</div>
<div class="mb" style="left:928px">变更</div>
<div class="c" style="left:1000px;width:180px;">2025-05-06 17:55:45</div>
<div class="c" style="left:1160px;width:180px;">2025-05-06 18:00:53</div>
<div class="sw"><i></i></div>
<div class="op" style="left:1469px;width:42px"><svg width="12" height="12" viewBox="0 0 12 12" style="left:0"><g fill="none" stroke="#409eff" stroke-width="1" stroke-linecap="round" stroke-linejoin="round"><path d="M7.300 1.300l2.200 2.200-5.600 6-2.600.600.500-2.600zM6.500 11h4.500"/></g></svg><span style="position:absolute;left:16px;top:1px">修改</span></div>
<div class="op" style="left:1522px;width:42px"><svg width="12" height="12" viewBox="0 0 12 12" style="left:0"><g fill="none" stroke="#409eff" stroke-width="1" stroke-linecap="round" stroke-linejoin="round"><path d="M1 3h10M4.300 3V1.300h3.400V3M2.200 3v7.700h7.600V3M4.800 5.200v3.500M7.200 5.200v3.500"/></g></svg><span style="position:absolute;left:16px;top:1px">删除</span></div>
<div class="op" style="left:1574px;width:42px"><svg width="12" height="12" viewBox="0 0 12 12" style="left:0"><g fill="none" stroke="#409eff" stroke-width="1" stroke-linecap="round" stroke-linejoin="round"><path d="M2 2.300l3.600 3.700L2 9.700M6 2.300l3.600 3.700L6 9.700"/></g></svg><span style="position:absolute;left:11px;top:1px">更多</span></div>
</div>
<div class="row" style="top:567px">
<div class="c" style="left:10px;text-align:left;">7702</div>
<div class="av"><svg width="45" height="45" viewBox="0 0 100 100" style=""><defs><clipPath id="av4"><circle cx="50" cy="50" r="50"/></clipPath></defs>
<g clip-path="url(#av4)"><rect width="100" height="100" fill="#d4e07b"/>
<path d="M22 100C22 82 33 72.500 50 72.500s28 9.500 28 27.500z" fill="#9dd5f3"/>
<path d="M43 66h14v8l-7 5-7-5z" fill="#fdeae8"/>
<path d="M40.500 70.500l9.500 7 9.500-7v5.500l-9.500 4-9.500-4z" fill="#fff"/>
<path d="M39.500 73.500L50 79.500 39.500 85.500zM60.500 73.500L50 79.500l10.500 6z" fill="#e8746a"/>
<circle cx="50" cy="48.500" r="23" fill="#fdeae8"/>
<path d="M27 50A23 23 0 0 1 49 25.500V38C44 46 36 49 27 50z" fill="#fdc968"/>
<path d="M73 50A23 23 0 0 0 49 25.500V38c5 8 14 11 24 12z" fill="#f5b461"/>
</g><circle cx="50" cy="50" r="49.200" fill="none" stroke="#d3d6cc" stroke-width="1.800"/></svg></div>
<div class="c" style="left:201px;text-align:left;">8736480359108</div>
<div class="c" style="left:322px;width:160px;">8736480359108</div>
<div class="c" style="left:434px;width:160px;">-</div>
<div class="c" style="left:524px;width:160px;">普通会员</div>
<div class="c" style="left:624px;width:160px;">海口解放路店</div>
<div class="num red" style="left:775px;width:100px">0.00</div>
<div class="mb" style="left:805px">充值</div>
<div class="num" style="left:898px;width:100px">1123</div>
<div class="mb" style="left:928px">变更</div>
<div class="c" style="left:1000px;width:180px;">2025-05-06 17:09:37</div>
<div class="c" style="left:1160px;width:180px;">2025-05-06 17:30:48</div>
<div class="sw"><i></i></div>
<div class="op" style="left:1469px;width:42px"><svg width="12" height="12" viewBox="0 0 12 12" style="left:0"><g fill="none" stroke="#409eff" stroke-width="1" stroke-linecap="round" stroke-linejoin="round"><path d="M7.300 1.300l2.200 2.200-5.600 6-2.600.600.500-2.600zM6.500 11h4.500"/></g></svg><span style="position:absolute;left:16px;top:1px">修改</span></div>
<div class="op" style="left:1522px;width:42px"><svg width="12" height="12" viewBox="0 0 12 12" style="left:0"><g fill="none" stroke="#409eff" stroke-width="1" stroke-linecap="round" stroke-linejoin="round"><path d="M1 3h10M4.300 3V1.300h3.400V3M2.200 3v7.700h7.600V3M4.800 5.200v3.500M7.200 5.200v3.500"/></g></svg><span style="position:absolute;left:16px;top:1px">删除</span></div>
<div class="op" style="left:1574px;width:42px"><svg width="12" height="12" viewBox="0 0 12 12" style="left:0"><g fill="none" stroke="#409eff" stroke-width="1" stroke-linecap="round" stroke-linejoin="round"><path d="M2 2.300l3.600 3.700L2 9.700M6 2.300l3.600 3.700L6 9.700"/></g></svg><span style="position:absolute;left:11px;top:1px">更多</span></div>
</div>
<div class="row" style="top:640px">
<div class="c" style="left:10px;text-align:left;">7700</div>
<div class="av"><svg width="45" height="45" viewBox="0 0 100 100" style=""><defs><clipPath id="av5"><circle cx="50" cy="50" r="50"/></clipPath></defs>
<g clip-path="url(#av5)"><rect width="100" height="100" fill="#d4e07b"/>
<path d="M22 100C22 82 33 72.500 50 72.500s28 9.500 28 27.500z" fill="#9dd5f3"/>
<path d="M43 66h14v8l-7 5-7-5z" fill="#fdeae8"/>
<path d="M40.500 70.500l9.500 7 9.500-7v5.500l-9.500 4-9.500-4z" fill="#fff"/>
<path d="M39.500 73.500L50 79.500 39.500 85.500zM60.500 73.500L50 79.500l10.500 6z" fill="#e8746a"/>
<circle cx="50" cy="48.500" r="23" fill="#fdeae8"/>
<path d="M27 50A23 23 0 0 1 49 25.500V38C44 46 36 49 27 50z" fill="#fdc968"/>
<path d="M73 50A23 23 0 0 0 49 25.500V38c5 8 14 11 24 12z" fill="#f5b461"/>
</g><circle cx="50" cy="50" r="49.200" fill="none" stroke="#d3d6cc" stroke-width="1.800"/></svg></div>
<div class="c" style="left:201px;text-align:left;">8856286400898</div>
<div class="c" style="left:322px;width:160px;">8856286400898</div>
<div class="c" style="left:434px;width:160px;">-</div>
<div class="c" style="left:524px;width:160px;">普通会员</div>
<div class="c" style="left:624px;width:160px;">海口解放路店</div>
<div class="num red" style="left:775px;width:100px">0.00</div>
<div class="mb" style="left:805px">充值</div>
<div class="num" style="left:898px;width:100px">1123</div>
<div class="mb" style="left:928px">变更</div>
<div class="c" style="left:1000px;width:180px;">2025-05-06 16:13:30</div>
<div class="c" style="left:1160px;width:180px;">2025-05-06 16:31:38</div>
<div class="sw"><i></i></div>
<div class="op" style="left:1469px;width:42px"><svg width="12" height="12" viewBox="0 0 12 12" style="left:0"><g fill="none" stroke="#409eff" stroke-width="1" stroke-linecap="round" stroke-linejoin="round"><path d="M7.300 1.300l2.200 2.200-5.600 6-2.600.600.500-2.600zM6.500 11h4.500"/></g></svg><span style="position:absolute;left:16px;top:1px">修改</span></div>
<div class="op" style="left:1522px;width:42px"><svg width="12" height="12" viewBox="0 0 12 12" style="left:0"><g fill="none" stroke="#409eff" stroke-width="1" stroke-linecap="round" stroke-linejoin="round"><path d="M1 3h10M4.300 3V1.300h3.400V3M2.200 3v7.700h7.600V3M4.800 5.200v3.500M7.200 5.200v3.500"/></g></svg><span style="position:absolute;left:16px;top:1px">删除</span></div>
<div class="op" style="left:1574px;width:42px"><svg width="12" height="12" viewBox="0 0 12 12" style="left:0"><g fill="none" stroke="#409eff" stroke-width="1" stroke-linecap="round" stroke-linejoin="round"><path d="M2 2.300l3.600 3.700L2 9.700M6 2.300l3.600 3.700L6 9.700"/></g></svg><span style="position:absolute;left:11px;top:1px">更多</span></div>
</div>
<div class="row" style="top:713px">
<div class="c" style="left:10px;text-align:left;">7698</div>
<div class="av"><svg width="45" height="45" viewBox="0 0 100 100" style=""><defs><clipPath id="av6"><circle cx="50" cy="50" r="50"/></clipPath></defs>
<g clip-path="url(#av6)"><rect width="100" height="100" fill="#d4e07b"/>
<path d="M22 100C22 82 33 72.500 50 72.500s28 9.500 28 27.500z" fill="#9dd5f3"/>
<path d="M43 66h14v8l-7 5-7-5z" fill="#fdeae8"/>
<path d="M40.500 70.500l9.500 7 9.500-7v5.500l-9.500 4-9.500-4z" fill="#fff"/>
<path d="M39.500 73.500L50 79.500 39.500 85.500zM60.500 73.500L50 79.500l10.500 6z" fill="#e8746a"/>
<circle cx="50" cy="48.500" r="23" fill="#fdeae8"/>
<path d="M27 50A23 23 0 0 1 49 25.500V38C44 46 36 49 27 50z" fill="#fdc968"/>
<path d="M73 50A23 23 0 0 0 49 25.500V38c5 8 14 11 24 12z" fill="#f5b461"/>
</g><circle cx="50" cy="50" r="49.200" fill="none" stroke="#d3d6cc" stroke-width="1.800"/></svg></div>
<div class="c" style="left:201px;text-align:left;">8195428672892</div>
<div class="c" style="left:322px;width:160px;">te1</div>
<div class="c" style="left:434px;width:160px;">-</div>
<div class="c" style="left:524px;width:160px;">普通会员</div>
<div class="c" style="left:624px;width:160px;">海口解放路店</div>
<div class="num red" style="left:775px;width:100px">0.00</div>
<div class="mb" style="left:805px">充值</div>
<div class="num" style="left:898px;width:100px">1123</div>
<div class="mb" style="left:928px">变更</div>
<div class="c" style="left:1000px;width:180px;">2025-05-06 16:06:03</div>
<div class="c" style="left:1160px;width:180px;">2025-05-06 16:07:30</div>
<div class="sw"><i></i></div>
<div class="op" style="left:1469px;width:42px"><svg width="12" height="12" viewBox="0 0 12 12" style="left:0"><g fill="none" stroke="#409eff" stroke-width="1" stroke-linecap="round" stroke-linejoin="round"><path d="M7.300 1.300l2.200 2.200-5.600 6-2.600.600.500-2.600zM6.500 11h4.500"/></g></svg><span style="position:absolute;left:16px;top:1px">修改</span></div>
<div class="op" style="left:1522px;width:42px"><svg width="12" height="12" viewBox="0 0 12 12" style="left:0"><g fill="none" stroke="#409eff" stroke-width="1" stroke-linecap="round" stroke-linejoin="round"><path d="M1 3h10M4.300 3V1.300h3.400V3M2.200 3v7.700h7.600V3M4.800 5.200v3.500M7.200 5.200v3.500"/></g></svg><span style="position:absolute;left:16px;top:1px">删除</span></div>
<div class="op" style="left:1574px;width:42px"><svg width="12" height="12" viewBox="0 0 12 12" style="left:0"><g fill="none" stroke="#409eff" stroke-width="1" stroke-linecap="round" stroke-linejoin="round"><path d="M2 2.300l3.600 3.700L2 9.700M6 2.300l3.600 3.700L6 9.700"/></g></svg><span style="position:absolute;left:11px;top:1px">更多</span></div>
</div>
<div class="row" style="top:786px">
<div class="c" style="left:10px;text-align:left;">7699</div>
<div class="av"><svg width="45" height="45" viewBox="0 0 100 100" style=""><defs><clipPath id="av7"><circle cx="50" cy="50" r="50"/></clipPath></defs>
<g clip-path="url(#av7)"><rect width="100" height="100" fill="#d4e07b"/>
<path d="M22 100C22 82 33 72.500 50 72.500s28 9.500 28 27.500z" fill="#9dd5f3"/>
<path d="M43 66h14v8l-7 5-7-5z" fill="#fdeae8"/>
<path d="M40.500 70.500l9.500 7 9.500-7v5.500l-9.500 4-9.500-4z" fill="#fff"/>
<path d="M39.500 73.500L50 79.500 39.500 85.500zM60.500 73.500L50 79.500l10.500 6z" fill="#e8746a"/>
<circle cx="50" cy="48.500" r="23" fill="#fdeae8"/>
<path d="M27 50A23 23 0 0 1 49 25.500V38C44 46 36 49 27 50z" fill="#fdc968"/>
<path d="M73 50A23 23 0 0 0 49 25.500V38c5 8 14 11 24 12z" fill="#f5b461"/>
</g><circle cx="50" cy="50" r="49.200" fill="none" stroke="#d3d6cc" stroke-width="1.800"/></svg></div>
<div class="c" style="left:201px;text-align:left;">8366006743292</div>
<div class="c" style="left:322px;width:160px;">8366006743292</div>
<div class="c" style="left:434px;width:160px;">-</div>
<div class="c" style="left:524px;width:160px;">普通会员</div>
<div class="c" style="left:624px;width:160px;">海口解放路店</div>
<div class="num red" style="left:775px;width:100px">0.00</div>
<div class="mb" style="left:805px">充值</div>
<div class="num" style="left:898px;width:100px">1123</div>
<div class="mb" style="left:928px">变更</div>
<div class="c" style="left:1000px;width:180px;">2025-05-06 16:06:20</div>
<div class="c" style="left:1160px;width:180px;">2025-05-06 16:06:20</div>
<div class="sw"><i></i></div>
<div class="op" style="left:1469px;width:42px"><svg width="12" height="12" viewBox="0 0 12 12" style="left:0"><g fill="none" stroke="#409eff" stroke-width="1" stroke-linecap="round" stroke-linejoin="round"><path d="M7.300 1.300l2.200 2.200-5.600 6-2.600.600.500-2.600zM6.500 11h4.500"/></g></svg><span style="position:absolute;left:16px;top:1px">修改</span></div>
<div class="op" style="left:1522px;width:42px"><svg width="12" height="12" viewBox="0 0 12 12" style="left:0"><g fill="none" stroke="#409eff" stroke-width="1" stroke-linecap="round" stroke-linejoin="round"><path d="M1 3h10M4.300 3V1.300h3.400V3M2.200 3v7.700h7.600V3M4.800 5.200v3.500M7.200 5.200v3.500"/></g></svg><span style="position:absolute;left:16px;top:1px">删除</span></div>
<div class="op" style="left:1574px;width:42px"><svg width="12" height="12" viewBox="0 0 12 12" style="left:0"><g fill="none" stroke="#409eff" stroke-width="1" stroke-linecap="round" stroke-linejoin="round"><path d="M2 2.300l3.600 3.700L2 9.700M6 2.300l3.600 3.700L6 9.700"/></g></svg><span style="position:absolute;left:11px;top:1px">更多</span></div>
</div>
<div class="row" style="top:859px">
<div class="c" style="left:10px;text-align:left;">7694</div>
<div class="av"><svg width="45" height="45" viewBox="0 0 100 100" style=""><defs><clipPath id="av8"><circle cx="50" cy="50" r="50"/></clipPath></defs>
<g clip-path="url(#av8)"><rect width="100" height="100" fill="#d4e07b"/>
<path d="M22 100C22 82 33 72.500 50 72.500s28 9.500 28 27.500z" fill="#9dd5f3"/>
<path d="M43 66h14v8l-7 5-7-5z" fill="#fdeae8"/>
<path d="M40.500 70.500l9.500 7 9.500-7v5.500l-9.500 4-9.500-4z" fill="#fff"/>
<path d="M39.500 73.500L50 79.500 39.500 85.500zM60.500 73.500L50 79.500l10.500 6z" fill="#e8746a"/>
<circle cx="50" cy="48.500" r="23" fill="#fdeae8"/>
<path d="M27 50A23 23 0 0 1 49 25.500V38C44 46 36 49 27 50z" fill="#fdc968"/>
<path d="M73 50A23 23 0 0 0 49 25.500V38c5 8 14 11 24 12z" fill="#f5b461"/>
</g><circle cx="50" cy="50" r="49.200" fill="none" stroke="#d3d6cc" stroke-width="1.800"/></svg></div>
<div class="c" style="left:201px;text-align:left;">8705413096875</div>
<div class="c" style="left:322px;width:160px;">188****4621</div>
<div class="c" style="left:434px;width:160px;">188****4621</div>
<div class="c" style="left:524px;width:160px;">普通会员</div>
<div class="c" style="left:624px;width:160px;">海口解放路店</div>
<div class="num red" style="left:775px;width:100px">0.00</div>
<div class="mb" style="left:805px">充值</div>
<div class="num" style="left:898px;width:100px">1000</div>
<div class="mb" style="left:928px">变更</div>
<div class="c" style="left:1000px;width:180px;">2025-04-29 16:22:51</div>
<div class="c" style="left:1160px;width:180px;">2025-05-06 13:05:40</div>
<div class="sw"><i></i></div>
<div class="op" style="left:1469px;width:42px"><svg width="12" height="12" viewBox="0 0 12 12" style="left:0"><g fill="none" stroke="#409eff" stroke-width="1" stroke-linecap="round" stroke-linejoin="round"><path d="M7.300 1.300l2.200 2.200-5.600 6-2.600.600.500-2.600zM6.500 11h4.500"/></g></svg><span style="position:absolute;left:16px;top:1px">修改</span></div>
<div class="op" style="left:1522px;width:42px"><svg width="12" height="12" viewBox="0 0 12 12" style="left:0"><g fill="none" stroke="#409eff" stroke-width="1" stroke-linecap="round" stroke-linejoin="round"><path d="M1 3h10M4.300 3V1.300h3.400V3M2.200 3v7.700h7.600V3M4.800 5.200v3.500M7.200 5.200v3.500"/></g></svg><span style="position:absolute;left:16px;top:1px">删除</span></div>
<div class="op" style="left:1574px;width:42px"><svg width="12" height="12" viewBox="0 0 12 12" style="left:0"><g fill="none" stroke="#409eff" stroke-width="1" stroke-linecap="round" stroke-linejoin="round"><path d="M2 2.300l3.600 3.700L2 9.700M6 2.300l3.600 3.700L6 9.700"/></g></svg><span style="position:absolute;left:11px;top:1px">更多</span></div>
</div>
<div id="sbg"></div><div id="sb"><div class="th2"></div>
<div class="abs" style="left:4.500px;top:7px;width:0;height:0;border-left:4px solid transparent;border-right:4px solid transparent;border-bottom:4.500px solid #a3a3a3"></div>
<div class="abs" style="left:4.500px;top:915px;width:0;height:0;border-left:4px solid transparent;border-right:4px solid transparent;border-top:4.500px solid #505050"></div>
</div>
<div id="bot"><i></i></div>
</div>
</body>
</html>
